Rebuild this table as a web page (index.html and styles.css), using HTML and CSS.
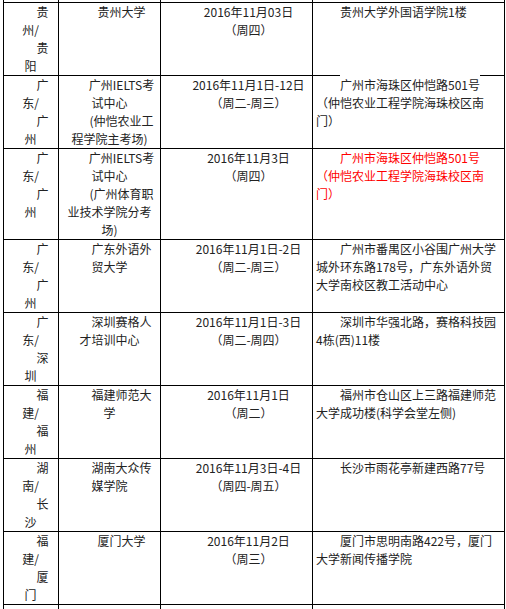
FILE: index.html
```html
<!DOCTYPE html>
<html lang="zh-CN">
<head>
<meta charset="utf-8">
<title>考点列表</title>
<link rel="stylesheet" href="styles.css">
</head>
<body>
<table class="grid">
  <colgroup><col class="c1"><col class="c2"><col class="c3"><col class="c4"></colgroup>
  <tr class="cut top"><td></td><td></td><td></td><td></td></tr>
  <tr>
    <td class="region"><p>贵州/</p><p>贵阳</p></td>
    <td class="mid"><p>贵州大学</p></td>
    <td class="mid"><p>2016年11月03日</p><p>（周四）</p></td>
    <td class="addr"><p>贵州大学外国语学院1楼</p></td>
  </tr>
  <tr>
    <td class="region"><p>广东/</p><p>广州</p></td>
    <td class="mid"><p>广州IELTS考试中心</p><p>(仲恺农业工程学院主考场)</p></td>
    <td class="mid"><p>2016年11月1日-12日</p><p>（周二-周三）</p></td>
    <td class="addr"><p><span class="mask">广州市海珠区仲恺路501号</span>（仲恺农业工程学院海珠校区南门）</p></td>
  </tr>
  <tr>
    <td class="region"><p>广东/</p><p>广州</p></td>
    <td class="mid"><p>广州IELTS考试中心</p><p>(广州体育职业技术学院分考场)</p></td>
    <td class="mid"><p>2016年11月3日</p><p>（周四）</p></td>
    <td class="addr red"><p>广州市海珠区仲恺路501号（仲恺农业工程学院海珠校区南门）</p></td>
  </tr>
  <tr>
    <td class="region"><p>广东/</p><p>广州</p></td>
    <td class="mid"><p>广东外语外贸大学</p></td>
    <td class="mid"><p>2016年11月1日-2日</p><p>（周二-周三）</p></td>
    <td class="addr"><p>广州市番禺区小谷围广州大学城外环东路178号，广东外语外贸大学南校区教工活动中心</p></td>
  </tr>
  <tr>
    <td class="region"><p>广东/</p><p>深圳</p></td>
    <td class="mid"><p>深圳赛格人才培训中心</p></td>
    <td class="mid"><p>2016年11月1日-3日</p><p>（周二-周四）</p></td>
    <td class="addr"><p>深圳市华强北路，赛格科技园4栋(西)11楼</p></td>
  </tr>
  <tr>
    <td class="region"><p>福建/</p><p>福州</p></td>
    <td class="mid"><p>福建师范大学</p></td>
    <td class="mid"><p>2016年11月1日</p><p>（周二）</p></td>
    <td class="addr"><p>福州市仓山区上三路福建师范大学成功楼(科学会堂左侧)</p></td>
  </tr>
  <tr>
    <td class="region"><p>湖南/</p><p>长沙</p></td>
    <td class="mid"><p>湖南大众传媒学院</p></td>
    <td class="mid"><p>2016年11月3日-4日</p><p>（周四-周五）</p></td>
    <td class="addr"><p>长沙市雨花亭新建西路77号</p></td>
  </tr>
  <tr>
    <td class="region"><p>福建/</p><p>厦门</p></td>
    <td class="mid"><p>厦门大学</p></td>
    <td class="mid"><p>2016年11月2日</p><p>（周三）</p></td>
    <td class="addr"><p>厦门市思明南路422号，厦门大学新闻传播学院</p></td>
  </tr>
  <tr class="cut bottom"><td></td><td></td><td></td><td></td></tr>
</table>
</body>
</html>
```
FILE: styles.css
```css
html, body {
  margin: 0;
  padding: 0;
  background: #fff;
}
body {
  font-family: "Noto Sans CJK SC", "Noto Sans", sans-serif;
  font-size: 12px;
  color: #222;
  overflow: hidden;
  text-spacing-trim: space-all;
}
.grid {
  border-collapse: collapse;
  table-layout: fixed;
  width: 502px;
  margin-left: 3px;
}
.c1 { width: 55px; }
.c2 { width: 102px; }
.c3 { width: 152px; }
.c4 { width: 192px; }
.grid td {
  border: 1px solid #000;
  padding: 0 3px;
  vertical-align: top;
}
.grid p {
  margin: 0;
  line-height: 18px;
  text-indent: 2em;
  text-spacing-trim: space-all;
}
.grid td.region {
  padding: 0 4px 0 3px;
  text-align: center;
}
.grid td.mid {
  text-align: center;
}
.grid td.addr {
  text-align: left;
}
.grid td.red {
  color: #f00;
}
.mask {
  background: #fff;
  padding-top: 3px;
}
.cut td {
  padding: 0;
}
.cut.top td {
  border-top: none;
  height: 2px;
}
.cut.bottom td {
  border-bottom: none;
  height: 12px;
}
```
